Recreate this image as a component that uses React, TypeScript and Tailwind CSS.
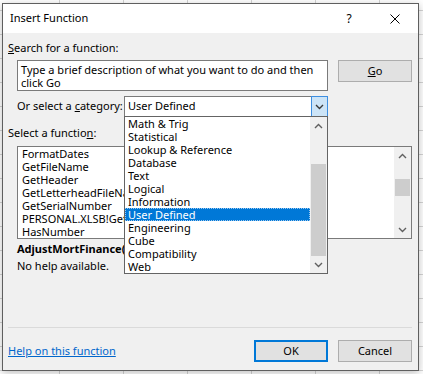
import React from "react";

const categories = [
  "Math & Trig",
  "Statistical",
  "Lookup & Reference",
  "Database",
  "Text",
  "Logical",
  "Information",
  "User Defined",
  "Engineering",
  "Cube",
  "Compatibility",
  "Web",
];

const functions = [
  "FormatDates",
  "GetFileName",
  "GetHeader",
  "GetLetterheadFileName",
  "GetSerialNumber",
  "PERSONAL.XLSB!GetWorkbookPath",
  "HasNumber",
];

function Chevron({ dir }: { dir: "up" | "down" }) {
  return (
    <svg width="9" height="6" viewBox="0 0 9 6">
      <path
        d={dir === "up" ? "M1 5 L4.5 1.5 L8 5" : "M1 1 L4.5 4.5 L8 1"}
        fill="none"
        stroke="currentColor"
        strokeWidth="1.4"
      />
    </svg>
  );
}

function ScrollBar({ gap, thumb }: { gap: number; thumb: number }) {
  return (
    <div className="w-[17px] h-full bg-[#f0f0f0] flex flex-col shrink-0">
      <div className="h-[17px] flex items-center justify-center text-[#606060]">
        <Chevron dir="up" />
      </div>
      <div className="flex-1 flex flex-col">
        <div style={{ height: gap }} />
        <div className="mx-px bg-[#cdcdcd]" style={{ height: thumb }} />
      </div>
      <div className="h-[17px] flex items-center justify-center text-[#606060]">
        <Chevron dir="down" />
      </div>
    </div>
  );
}

export default function App() {
  return (
    <div className="w-[423px] h-[374px] pl-[2px] pt-[3px] bg-white bg-[linear-gradient(90deg,#d4d4d4_1px,transparent_1px),linear-gradient(180deg,#d4d4d4_1px,transparent_1px)] bg-size-[64px_24px] bg-position-[59px_10px] font-['Noto_Sans',sans-serif] text-[11px] text-black">
      <div className="w-[417px] h-[368px] border border-[#5f5f5f] bg-[#f0f0f0] flex flex-col shadow-[0_2px_8px_rgba(0,0,0,0.25)]">
        {/* title bar */}
        <div className="h-[29px] bg-white flex items-center shrink-0">
          <span className="pl-[7px] text-[11px]">Insert Function</span>
          <div className="ml-auto flex h-full">
            <div className="w-[46px] flex items-center justify-center text-[12px]">?</div>
            <div className="w-[46px] flex items-center justify-center">
              <svg width="10" height="10" viewBox="0 0 10 10">
                <path d="M0.5 0.5 L9.5 9.5 M9.5 0.5 L0.5 9.5" stroke="#000" strokeWidth="1" />
              </svg>
            </div>
          </div>
        </div>

        {/* body */}
        <div className="flex-1 flex flex-col">
          <div className="mt-[7px] ml-[5px] h-[15px] leading-[15px]">
            <span className="underline">S</span>earch for a function:
          </div>

          <div className="mt-[5px] ml-[14px] flex gap-[10px]">
            <div className="w-[311px] h-[31px] bg-white border border-[#7a7a7a] pl-[3px] pt-[2px] leading-[13px]">
              <div className="whitespace-nowrap">Type a brief description of what you want to do and then</div>
              <div>click Go</div>
            </div>
            <div className="w-[74px] h-[22px] bg-[#e1e1e1] border border-[#adadad] flex items-center justify-center">
              <span>
                <span className="underline">G</span>o
              </span>
            </div>
          </div>

          <div className="mt-[5px] ml-[14px] flex items-center h-[21px]">
            <div className="w-[107px] whitespace-nowrap">
              Or select a <span className="underline">c</span>ategory:
            </div>
            <div className="relative z-10 w-[204px] h-[21px]">
              <div className="h-full bg-white border border-[#7a7a7a] flex items-center">
                <span className="pl-[3px] flex-1">User Defined</span>
                <div className="w-[17px] h-[21px] -mr-px -my-px bg-[#cce4f7] border border-[#3d8ee0] flex items-center justify-center text-[#3a3a3a]">
                  <Chevron dir="down" />
                </div>
              </div>
              <div className="absolute left-0 top-[20px] w-[204px] h-[158px] bg-white border border-[#646464] flex">
                <div className="flex-1 flex flex-col">
                  {categories.map((c) =>
                    c === "User Defined" ? (
                      <div
                        key={c}
                        className="h-[13px] leading-[11px] pl-[2px] bg-[#0078d7] text-white border border-dotted border-[#9cc8f0]"
                      >
                        {c}
                      </div>
                    ) : (
                      <div key={c} className="h-[13px] leading-[13px] pl-[3px]">
                        {c}
                      </div>
                    )
                  )}
                </div>
                <ScrollBar gap={30} thumb={92} />
              </div>
            </div>
          </div>

          <div className="mt-[8px] ml-[5px] h-[15px] leading-[15px]">
            Select a functio<span className="underline">n</span>:
          </div>

          <div className="mt-[6px] ml-[14px] w-[395px] h-[93px] bg-white border border-[#7a7a7a] flex">
            <div className="flex-1 flex flex-col pl-[4px] overflow-hidden">
              {functions.map((f) => (
                <div key={f} className="h-[13px] leading-[13px] whitespace-nowrap">
                  {f}
                </div>
              ))}
            </div>
            <ScrollBar gap={15} thumb={17} />
          </div>

          <div className="mt-[2px] ml-[14px] h-[15px] leading-[15px] font-bold whitespace-nowrap">
            AdjustMortFinance(principal,rate,term)
          </div>
          <div className="mt-[2px] ml-[14px] h-[15px] leading-[15px]">No help available.</div>

          <div className="flex-1" />

          <div className="ml-[5px] w-[404px] h-px bg-[#dadada]" />

          <div className="mt-[12px] mb-[8px] ml-[5px] mr-[6px] flex items-center">
            <span className="text-[#0066cc] underline">Help on this function</span>
            <div className="ml-auto flex gap-[10px]">
              <div className="w-[74px] h-[22px] bg-[#e1e1e1] border-2 border-[#0078d7] flex items-center justify-center">
                OK
              </div>
              <div className="w-[74px] h-[22px] bg-[#e1e1e1] border border-[#adadad] flex items-center justify-center">
                Cancel
              </div>
            </div>
          </div>
        </div>
      </div>
    </div>
  );
}
